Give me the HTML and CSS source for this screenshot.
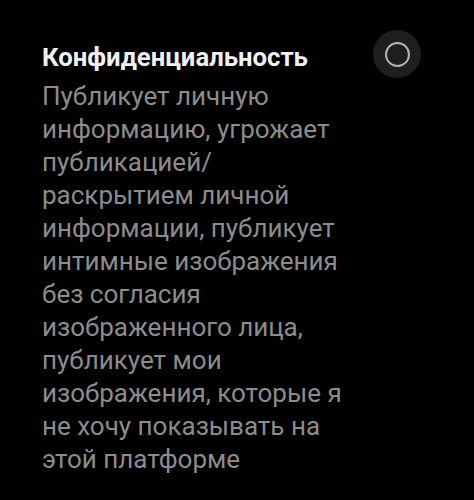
FILE: index.html
```html
<!DOCTYPE html>
<html lang="ru">
<head>
    <meta charset="utf-8">
    <meta name="viewport" content="width=device-width, initial-scale=1.0">
    <title>Конфиденциальность</title>
    <link rel="stylesheet" href="styles.css">
</head>
<body>
<div class="option">
    <div class="text">
        <div class="title">Конфиденциальность</div>
        <div class="desc">Публикует личную информацию, угрожает публикацией/ раскрытием личной информации, публикует интимные изображения без согласия изображенного лица, публикует мои изображения, которые я не хочу показывать на этой платформе</div>
    </div>
    <div class="radio"><span class="ring"></span></div>
</div>
</body>
</html>
```

FILE: styles.css
```css
@charset "utf-8";
body {
    background: black;
    font-family: Roboto, 'Noto Sans', sans-serif;
    margin: 0px;
    padding: 0px;
}
.option {
    display: flex;
    align-items: flex-start;
    padding: 30px 53px 0px 42px;
}
.text {
    width: 310px;
}
.title {
    color: rgb(240, 240, 240);
    font-size: 25.7px;
    font-weight: bold;
    line-height: 30px;
    padding-top: 12px;
}
.desc {
    color: rgb(140, 140, 140);
    font-size: 26px;
    line-height: 33px;
    margin-top: 8px;
}
.radio {
    margin-left: auto;
    width: 48px;
    height: 48px;
    border-radius: 50%;
    background-color: rgb(30, 30, 32);
    display: flex;
    align-items: center;
    justify-content: center;
}
.ring {
    width: 21px;
    height: 21px;
    border: 2.5px solid rgb(180, 180, 182);
    border-radius: 50%;
}
```
